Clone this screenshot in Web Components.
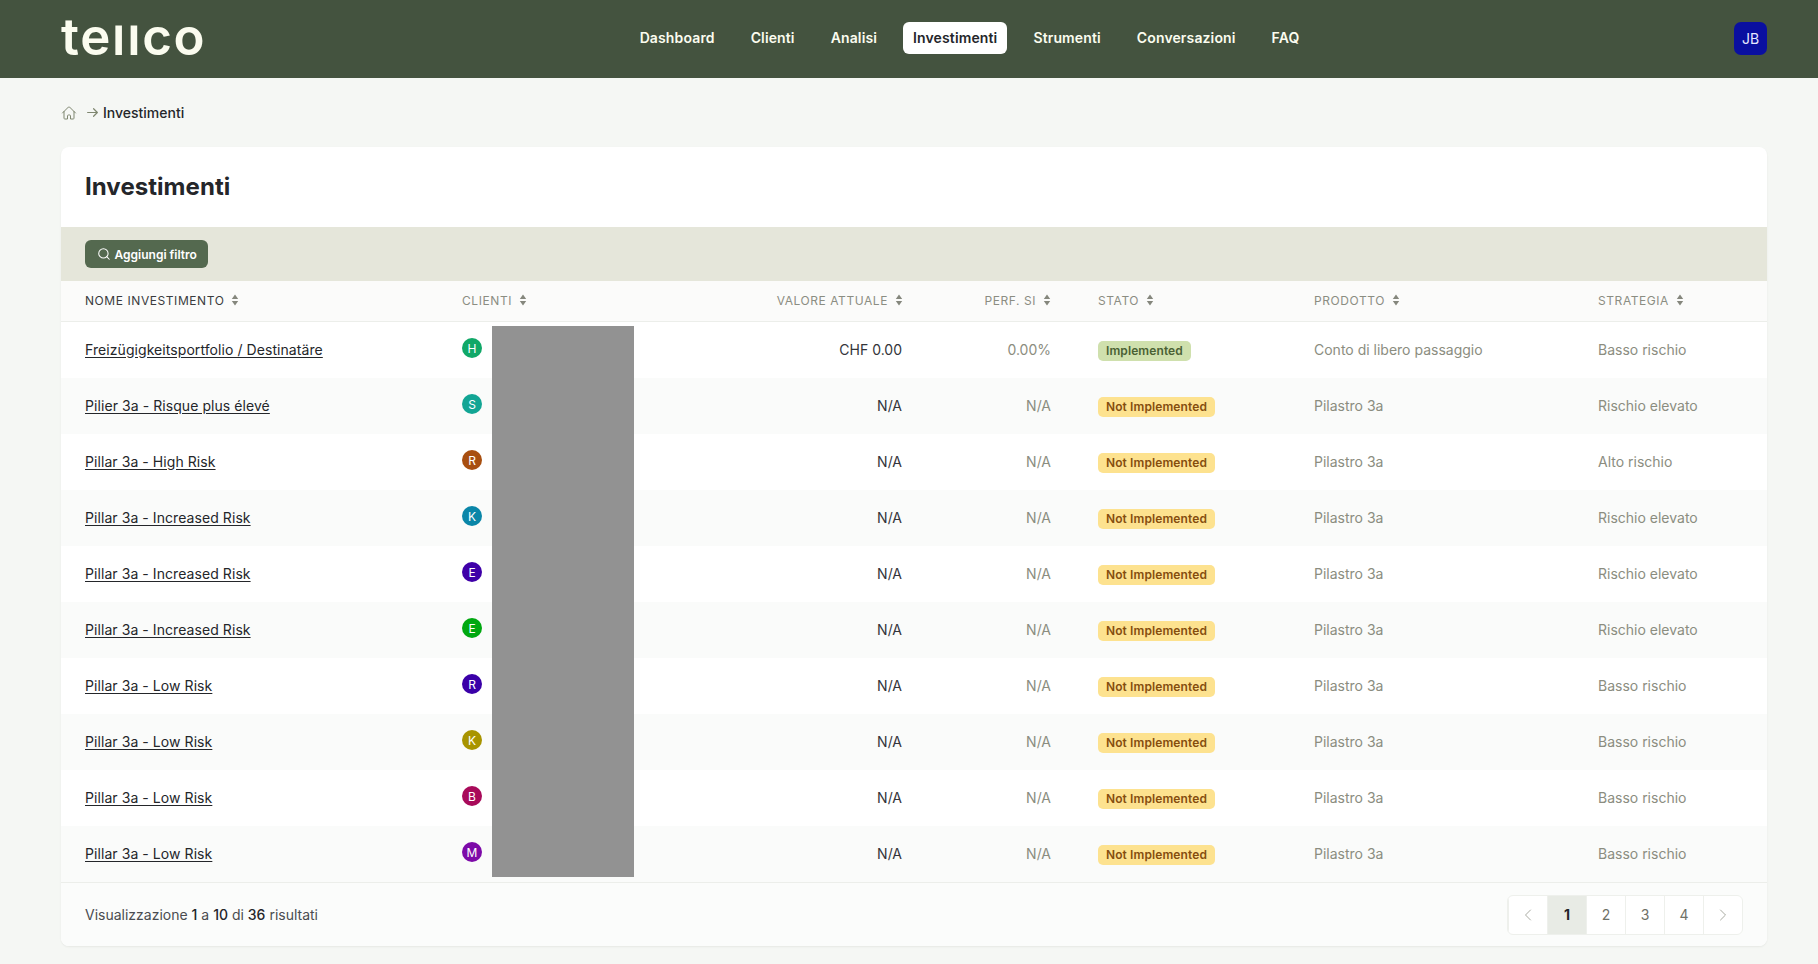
<!DOCTYPE html>
<html lang="it">
<head>
<meta charset="utf-8">
<title>Investimenti</title>
<style>
  html, body { margin: 0; background: #f5f7f4; }
  body { font-family: Inter, "Liberation Sans", sans-serif; font-size: 14px; color: #24262a; }
</style>
</head>
<body>

<tc-topbar>
  <tc-nav-link>Dashboard</tc-nav-link>
  <tc-nav-link>Clienti</tc-nav-link>
  <tc-nav-link>Analisi</tc-nav-link>
  <tc-nav-link active>Investimenti</tc-nav-link>
  <tc-nav-link>Strumenti</tc-nav-link>
  <tc-nav-link>Conversazioni</tc-nav-link>
  <tc-nav-link>FAQ</tc-nav-link>
</tc-topbar>

<tc-page>
  <tc-breadcrumb>Investimenti</tc-breadcrumb>
  <tc-card heading="Investimenti">
    <tc-filter-bar>Aggiungi filtro</tc-filter-bar>
    <tc-table>
      <tc-row name="Freizügigkeitsportfolio / Destinatäre" initial="H" color="#10a868" value="CHF 0.00" perf="0.00%" state="Implemented" product="Conto di libero passaggio" strategy="Basso rischio"></tc-row>
      <tc-row name="Pilier 3a - Risque plus élevé" initial="S" color="#12a594" state="Not Implemented" strategy="Rischio elevato"></tc-row>
      <tc-row name="Pillar 3a - High Risk" initial="R" color="#a84f10" state="Not Implemented" strategy="Alto rischio"></tc-row>
      <tc-row name="Pillar 3a - Increased Risk" initial="K" color="#0a86a8" state="Not Implemented" strategy="Rischio elevato"></tc-row>
      <tc-row name="Pillar 3a - Increased Risk" initial="E" color="#3f00a8" state="Not Implemented" strategy="Rischio elevato"></tc-row>
      <tc-row name="Pillar 3a - Increased Risk" initial="E" color="#00a810" state="Not Implemented" strategy="Rischio elevato"></tc-row>
      <tc-row name="Pillar 3a - Low Risk" initial="R" color="#3a00a8" state="Not Implemented" strategy="Basso rischio"></tc-row>
      <tc-row name="Pillar 3a - Low Risk" initial="K" color="#a89400" state="Not Implemented" strategy="Basso rischio"></tc-row>
      <tc-row name="Pillar 3a - Low Risk" initial="B" color="#a80a5a" state="Not Implemented" strategy="Basso rischio"></tc-row>
      <tc-row name="Pillar 3a - Low Risk" initial="M" color="#7d0aa8" state="Not Implemented" strategy="Basso rischio"></tc-row>
    </tc-table>
    <tc-card-footer></tc-card-footer>
  </tc-card>
</tc-page>

<script>
// griglia comune a intestazione e righe della tabella
const COLS = "377px 262px 226px 148px 216px 284px 193px";

class TcTopbar extends HTMLElement {
  constructor() {
    super();
    this.attachShadow({ mode: "open" });
    this.shadowRoot.innerHTML = `
      <style>
        :host { display: flex; align-items: center; justify-content: space-between;
                height: 78px; padding: 0 51px 0 61px; background: #44533f; }
        .logo { width: 142px; color: #fbfcef; font: 600 51px/1 Inter, sans-serif; letter-spacing: 1.7px;
                white-space: nowrap; display: flex; margin-top: -6px; }
        .logo .l { display: inline-block; clip-path: inset(15px 0 0 0); }
        nav { display: flex; gap: 16px; margin-top: -2px; margin-left: 2px; }
        .avatar { width: 33px; height: 33px; border-radius: 7px; background: #0a0fa0; color: #e6e8ff;
                  display: flex; align-items: center; justify-content: center; font-size: 14px; margin-top: -2px; }
      </style>
      <div class="logo"><span>te</span><span class="l">ll</span><span>co</span></div>
      <nav><slot></slot></nav>
      <div class="avatar">JB</div>
    `;
  }
}

class TcNavLink extends HTMLElement {
  constructor() {
    super();
    this.attachShadow({ mode: "open" });
    this.shadowRoot.innerHTML = `
      <style>
        :host { display: block; height: 32px; padding: 0 10px; border-radius: 6px; color: #fbfcef;
                font: 600 14px/32px Inter, sans-serif; letter-spacing: .13px; }
        :host([active]) { background: #fff; color: #24262a; }
      </style>
      <slot></slot>
    `;
  }
}

class TcPage extends HTMLElement {
  constructor() {
    super();
    this.attachShadow({ mode: "open" });
    this.shadowRoot.innerHTML = `
      <style>
        :host { display: block; padding: 0 51px 18px 61px; }
      </style>
      <slot></slot>
    `;
  }
}

class TcBreadcrumb extends HTMLElement {
  constructor() {
    super();
    this.attachShadow({ mode: "open" });
    this.shadowRoot.innerHTML = `
      <style>
        :host { display: flex; align-items: center; height: 69px; color: #24262a; font-size: 14px; font-weight: 500; }
        svg { fill: none; stroke: #7f8770; stroke-width: 1.5; stroke-linecap: round; stroke-linejoin: round; flex: none; }
        .home { width: 16px; height: 16px; margin-right: 9px; }
        .arrow { width: 13px; height: 13px; margin-right: 4px; }
      </style>
      <svg class="home" viewBox="0 0 24 24"><path d="M2.25 12l8.95-8.96a1.13 1.13 0 011.6 0L21.75 12M4.5 9.75v10.13c0 .62.5 1.12 1.13 1.12H9.75v-4.88c0-.62.5-1.12 1.13-1.12h2.25c.62 0 1.12.5 1.12 1.12V21h4.13c.62 0 1.12-.5 1.12-1.12V9.75"/></svg>
      <svg class="arrow" viewBox="0 0 24 24" style="stroke-width:2.2"><path d="M3 12h18M14 5l7 7-7 7"/></svg>
      <span><slot></slot></span>
    `;
  }
}

class TcCard extends HTMLElement {
  constructor() {
    super();
    this.attachShadow({ mode: "open" });
    this.shadowRoot.innerHTML = `
      <style>
        :host { display: block; background: #fff; border-radius: 8px; overflow: hidden;
                box-shadow: 0 1px 2px rgba(60, 70, 50, .08); }
        h1 { margin: 0; height: 80px; padding: 0 24px; box-sizing: border-box; display: flex; align-items: center;
             font: 700 24px/32px Inter, sans-serif; letter-spacing: .05px; color: #24262a; }
      </style>
      <h1></h1>
      <slot></slot>
    `;
    this.shadowRoot.querySelector("h1").textContent = this.getAttribute("heading");
  }
}

class TcFilterBar extends HTMLElement {
  constructor() {
    super();
    this.attachShadow({ mode: "open" });
    this.shadowRoot.innerHTML = `
      <style>
        :host { display: flex; align-items: center; height: 54px; padding: 0 24px; background: #e5e6da; }
        button { display: flex; align-items: center; gap: 4px; height: 28px; padding: 0 11.5px; border: 0;
                 border-radius: 6px; background: #54694f; color: #fff; font: 600 12px Inter, sans-serif; }
        svg { width: 14px; height: 14px; fill: none; stroke: #fff; stroke-width: 1.8; stroke-linecap: round; }
      </style>
      <button>
        <svg viewBox="0 0 24 24"><circle cx="11" cy="11" r="8"/><path d="M21 21l-4.3-4.3"/></svg>
        <slot></slot>
      </button>
    `;
  }
}

class TcTable extends HTMLElement {
  constructor() {
    super();
    this.attachShadow({ mode: "open" });
    const sort = `<svg viewBox="0 0 8 12"><path d="M4 .5l3.2 4.4H.8zM4 11.5L.8 7.1h6.4z"/></svg>`;
    const head = [
      ["Nome investimento", "first"], ["Clienti", ""], ["Valore attuale", "num"], ["Perf. SI", "num"],
      ["Stato", ""], ["Prodotto", ""], ["Strategia", ""],
    ];
    this.shadowRoot.innerHTML = `
      <style>
        :host { display: block; }
        .head { display: grid; grid-template-columns: ${COLS}; height: 41px; background: #fbfbfa;
                border-bottom: 1px solid #eceeea; box-sizing: border-box; }
        .head div { display: flex; align-items: center; gap: 7px; padding: 0 24px 2px; font-size: 12px;
                    letter-spacing: .57px; text-transform: uppercase; color: #8b8d82; }
        .head .first { color: #3a3c3e; }
        .head .num { justify-content: flex-end; }
        svg { width: 8px; height: 12px; fill: #85877d; flex: none; margin-top: -1px; }
        .num svg { margin-right: -1px; }
        .body { position: relative; }
        /* riquadro grigio che copre i nomi dei clienti */
        .mask { position: absolute; left: 431px; top: 4px; bottom: 5px; width: 142px; background: #929292; }
      </style>
      <div class="head">
        ${head.map(([t, c]) => `<div class="${c}">${t}${sort}</div>`).join("")}
      </div>
      <div class="body">
        <slot></slot>
        <div class="mask"></div>
      </div>
    `;
  }
}

class TcRow extends HTMLElement {
  constructor() {
    super();
    this.attachShadow({ mode: "open" });
    const a = (n, d) => this.getAttribute(n) || d;
    const state = a("state", "");
    this.shadowRoot.innerHTML = `
      <style>
        :host { display: grid; grid-template-columns: ${COLS}; height: 56px; align-items: center; background: #fff; }
        :host(:nth-child(even)) { background: #fafbfa; }
        .cell { padding: 0 24px 2px; font-size: 14px; white-space: nowrap; }
        .name { color: #24262a; text-decoration: underline; text-underline-offset: 2px; font-weight: 400; letter-spacing: .07px; }
        .num { text-align: right; }
        .value { color: #33353a; }
        .soft { color: #8b8d80; }
        .perf { padding-right: 23px; }
        .dot { display: flex; width: 20px; height: 20px; margin-top: -2px; border-radius: 50%; color: #fff;
               align-items: center; justify-content: center; font-size: 12px; background: ${a("color", "#888")}; }
        .badge { display: inline-block; height: 20px; padding: 0 8px; border-radius: 5px; font: 600 12px/20px Inter, sans-serif;
                 letter-spacing: .1px; background: #fde28f; color: #854d0e; margin-top: 4px; }
        .badge.ok { background: #cfe0ad; color: #4a6134; }
      </style>
      <div class="cell"><span class="name">${a("name", "")}</span></div>
      <div class="cell"><span class="dot">${a("initial", "")}</span></div>
      <div class="cell num value">${a("value", "N/A")}</div>
      <div class="cell num soft perf">${a("perf", "N/A")}</div>
      <div class="cell"><span class="badge ${state === "Implemented" ? "ok" : ""}">${state}</span></div>
      <div class="cell soft">${a("product", "Pilastro 3a")}</div>
      <div class="cell soft">${a("strategy", "")}</div>
    `;
  }
}

class TcCardFooter extends HTMLElement {
  constructor() {
    super();
    this.attachShadow({ mode: "open" });
    this.shadowRoot.innerHTML = `
      <style>
        :host { display: flex; align-items: center; justify-content: space-between; height: 64px; box-sizing: border-box;
                padding: 0 24px; background: #fbfcfb; border-top: 1px solid #eceeea; color: #4a4c50; font-size: 14px; }
        b { font-weight: 500; color: #24262a; }
      </style>
      <span>Visualizzazione <b>1</b> a <b>10</b> di <b>36</b> risultati</span>
      <tc-pagination></tc-pagination>
    `;
  }
}

class TcPagination extends HTMLElement {
  constructor() {
    super();
    this.attachShadow({ mode: "open" });
    const chev = d => `<svg viewBox="0 0 24 24"><path d="${d}"/></svg>`;
    this.shadowRoot.innerHTML = `
      <style>
        :host { display: flex; height: 38px; border: 1px solid #eef0ec; border-radius: 6px; background: #fff; overflow: hidden; }
        span { width: 38px; display: flex; align-items: center; justify-content: center; color: #6f7167; font-size: 14px;
               border-left: 1px solid #eef0ec; }
        span:first-child { border-left: 0; }
        .on { background: #e8ebe5; color: #24262a; font-weight: 700; }
        svg { width: 16px; height: 16px; fill: none; stroke: #a9aba2; stroke-width: 1.5; stroke-linecap: round; stroke-linejoin: round; }
      </style>
      <span>${chev("M15.75 19.5L8.25 12l7.5-7.5")}</span>
      <span class="on">1</span><span>2</span><span>3</span><span>4</span>
      <span>${chev("M8.25 4.5l7.5 7.5-7.5 7.5")}</span>
    `;
  }
}

customElements.define("tc-nav-link", TcNavLink);
customElements.define("tc-topbar", TcTopbar);
customElements.define("tc-page", TcPage);
customElements.define("tc-breadcrumb", TcBreadcrumb);
customElements.define("tc-card", TcCard);
customElements.define("tc-filter-bar", TcFilterBar);
customElements.define("tc-row", TcRow);
customElements.define("tc-table", TcTable);
customElements.define("tc-pagination", TcPagination);
customElements.define("tc-card-footer", TcCardFooter);
</script>
</body>
</html>
